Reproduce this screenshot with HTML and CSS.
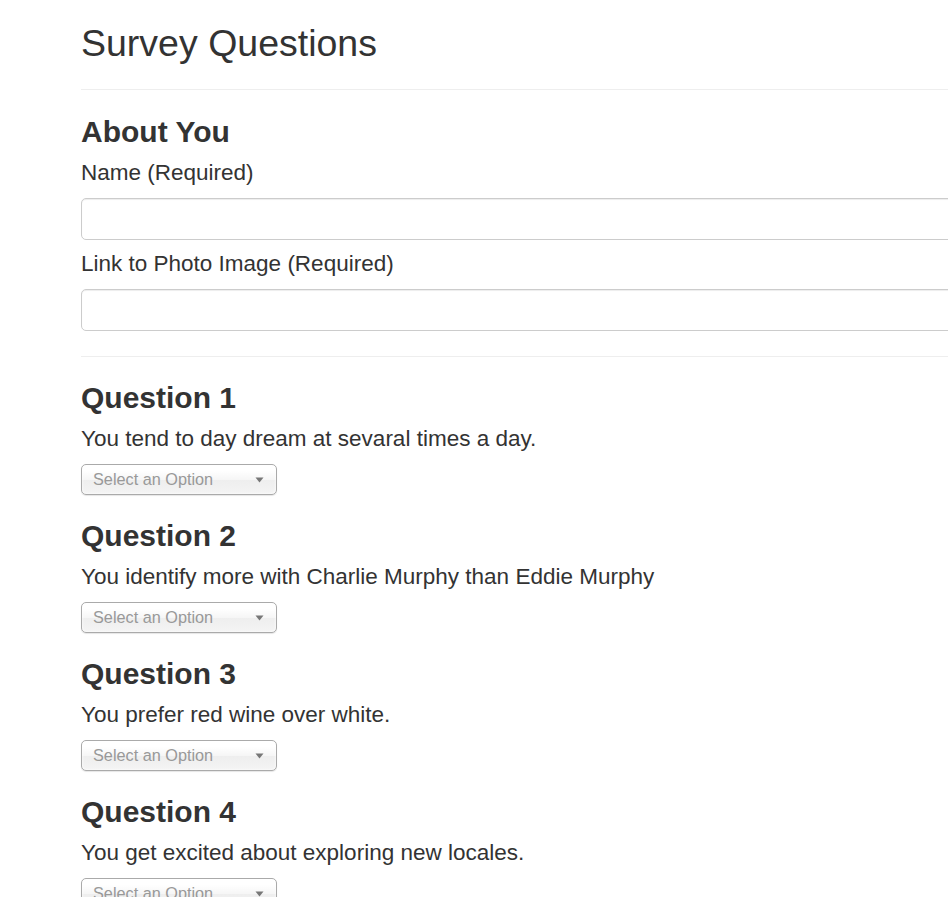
FILE: index.html
```html
<!DOCTYPE html>
<html lang="en">
<head>
<meta charset="utf-8">
<title>Survey Questions</title>
<link rel="stylesheet" href="styles.css">
</head>
<body>
<main class="container">
  <h1 class="page-title">Survey Questions</h1>
  <hr class="divider">
  <section class="about">
    <h3 class="section-title">About You</h3>
    <label class="field-label" for="name">Name (Required)</label>
    <input class="text-input" id="name" type="text">
    <label class="field-label" for="photo">Link to Photo Image (Required)</label>
    <input class="text-input" id="photo" type="text">
  </section>
  <hr class="divider">
  <section class="question">
    <h3 class="section-title">Question 1</h3>
    <p class="question-text">You tend to day dream at sevaral times a day.</p>
    <div class="chosen"><span class="chosen-text">Select an Option</span><svg class="chosen-arrow" width="9" height="6" viewBox="0 0 9 6"><path d="M0.5 0.5h8L4.5 5.5z" fill="#777"/></svg></div>
  </section>
  <section class="question">
    <h3 class="section-title">Question 2</h3>
    <p class="question-text">You identify more with Charlie Murphy than Eddie Murphy</p>
    <div class="chosen"><span class="chosen-text">Select an Option</span><svg class="chosen-arrow" width="9" height="6" viewBox="0 0 9 6"><path d="M0.5 0.5h8L4.5 5.5z" fill="#777"/></svg></div>
  </section>
  <section class="question">
    <h3 class="section-title">Question 3</h3>
    <p class="question-text">You prefer red wine over white.</p>
    <div class="chosen"><span class="chosen-text">Select an Option</span><svg class="chosen-arrow" width="9" height="6" viewBox="0 0 9 6"><path d="M0.5 0.5h8L4.5 5.5z" fill="#777"/></svg></div>
  </section>
  <section class="question">
    <h3 class="section-title">Question 4</h3>
    <p class="question-text">You get excited about exploring new locales.</p>
    <div class="chosen"><span class="chosen-text">Select an Option</span><svg class="chosen-arrow" width="9" height="6" viewBox="0 0 9 6"><path d="M0.5 0.5h8L4.5 5.5z" fill="#777"/></svg></div>
  </section>
</main>
</body>
</html>
```
FILE: styles.css
```css
html, body {
  margin: 0;
  padding: 0;
  overflow-x: hidden;
  background: #fff;
}
body {
  font-family: "Liberation Sans", Arial, sans-serif;
  color: #333;
  font-size: 17.5px;
  line-height: 25px;
}
.container {
  margin-left: 81px;
  width: 960px;
  padding-bottom: 40px;
}
.page-title {
  font-size: 37.5px;
  font-weight: 400;
  line-height: 41px;
  margin: 23px 0 0;
}
.divider {
  border: 0;
  border-top: 1px solid #eee;
  margin: 25px 0 0;
  height: 0;
}
.section-title {
  font-size: 30px;
  font-weight: 700;
  line-height: 33px;
  margin: 25px 0 12px;
}
.about {
  display: flex;
  flex-direction: column;
}
.field-label {
  display: block;
  font-size: 22.5px;
  line-height: 25px;
  margin-bottom: 12.5px;
}
.text-input {
  display: block;
  box-sizing: border-box;
  width: 100%;
  height: 42px;
  border: 1px solid #ccc;
  border-radius: 5px;
  box-shadow: inset 0 1px 1px rgba(0,0,0,.075);
  margin: 0 0 11.5px;
  font-size: 17.5px;
  padding: 8px 15px;
}
.about .text-input:last-child {
  margin-bottom: 0;
}
.question .section-title {
  margin-top: 24.5px;
}
.question:first-of-type .section-title {
  margin-top: 29px;
}
.question-text {
  font-size: 22.5px;
  line-height: 25px;
  margin: 0 0 12.5px;
}
.chosen {
  box-sizing: border-box;
  width: 196px;
  height: 31px;
  border: 1px solid #aaa;
  border-radius: 5px;
  background: linear-gradient(#ffffff 20%, #f6f6f6 50%, #eeeeee 52%, #f4f4f4 100%);
  box-shadow: inset 0 0 3px #fff, 0 1px 1px rgba(0,0,0,.1);
  display: flex;
  align-items: center;
  justify-content: space-between;
  padding: 0 12px 0 11px;
  color: #999;
  font-size: 16.25px;
  line-height: 29px;
}
.chosen-arrow {
  flex: none;
  margin-top: 1px;
}
```
